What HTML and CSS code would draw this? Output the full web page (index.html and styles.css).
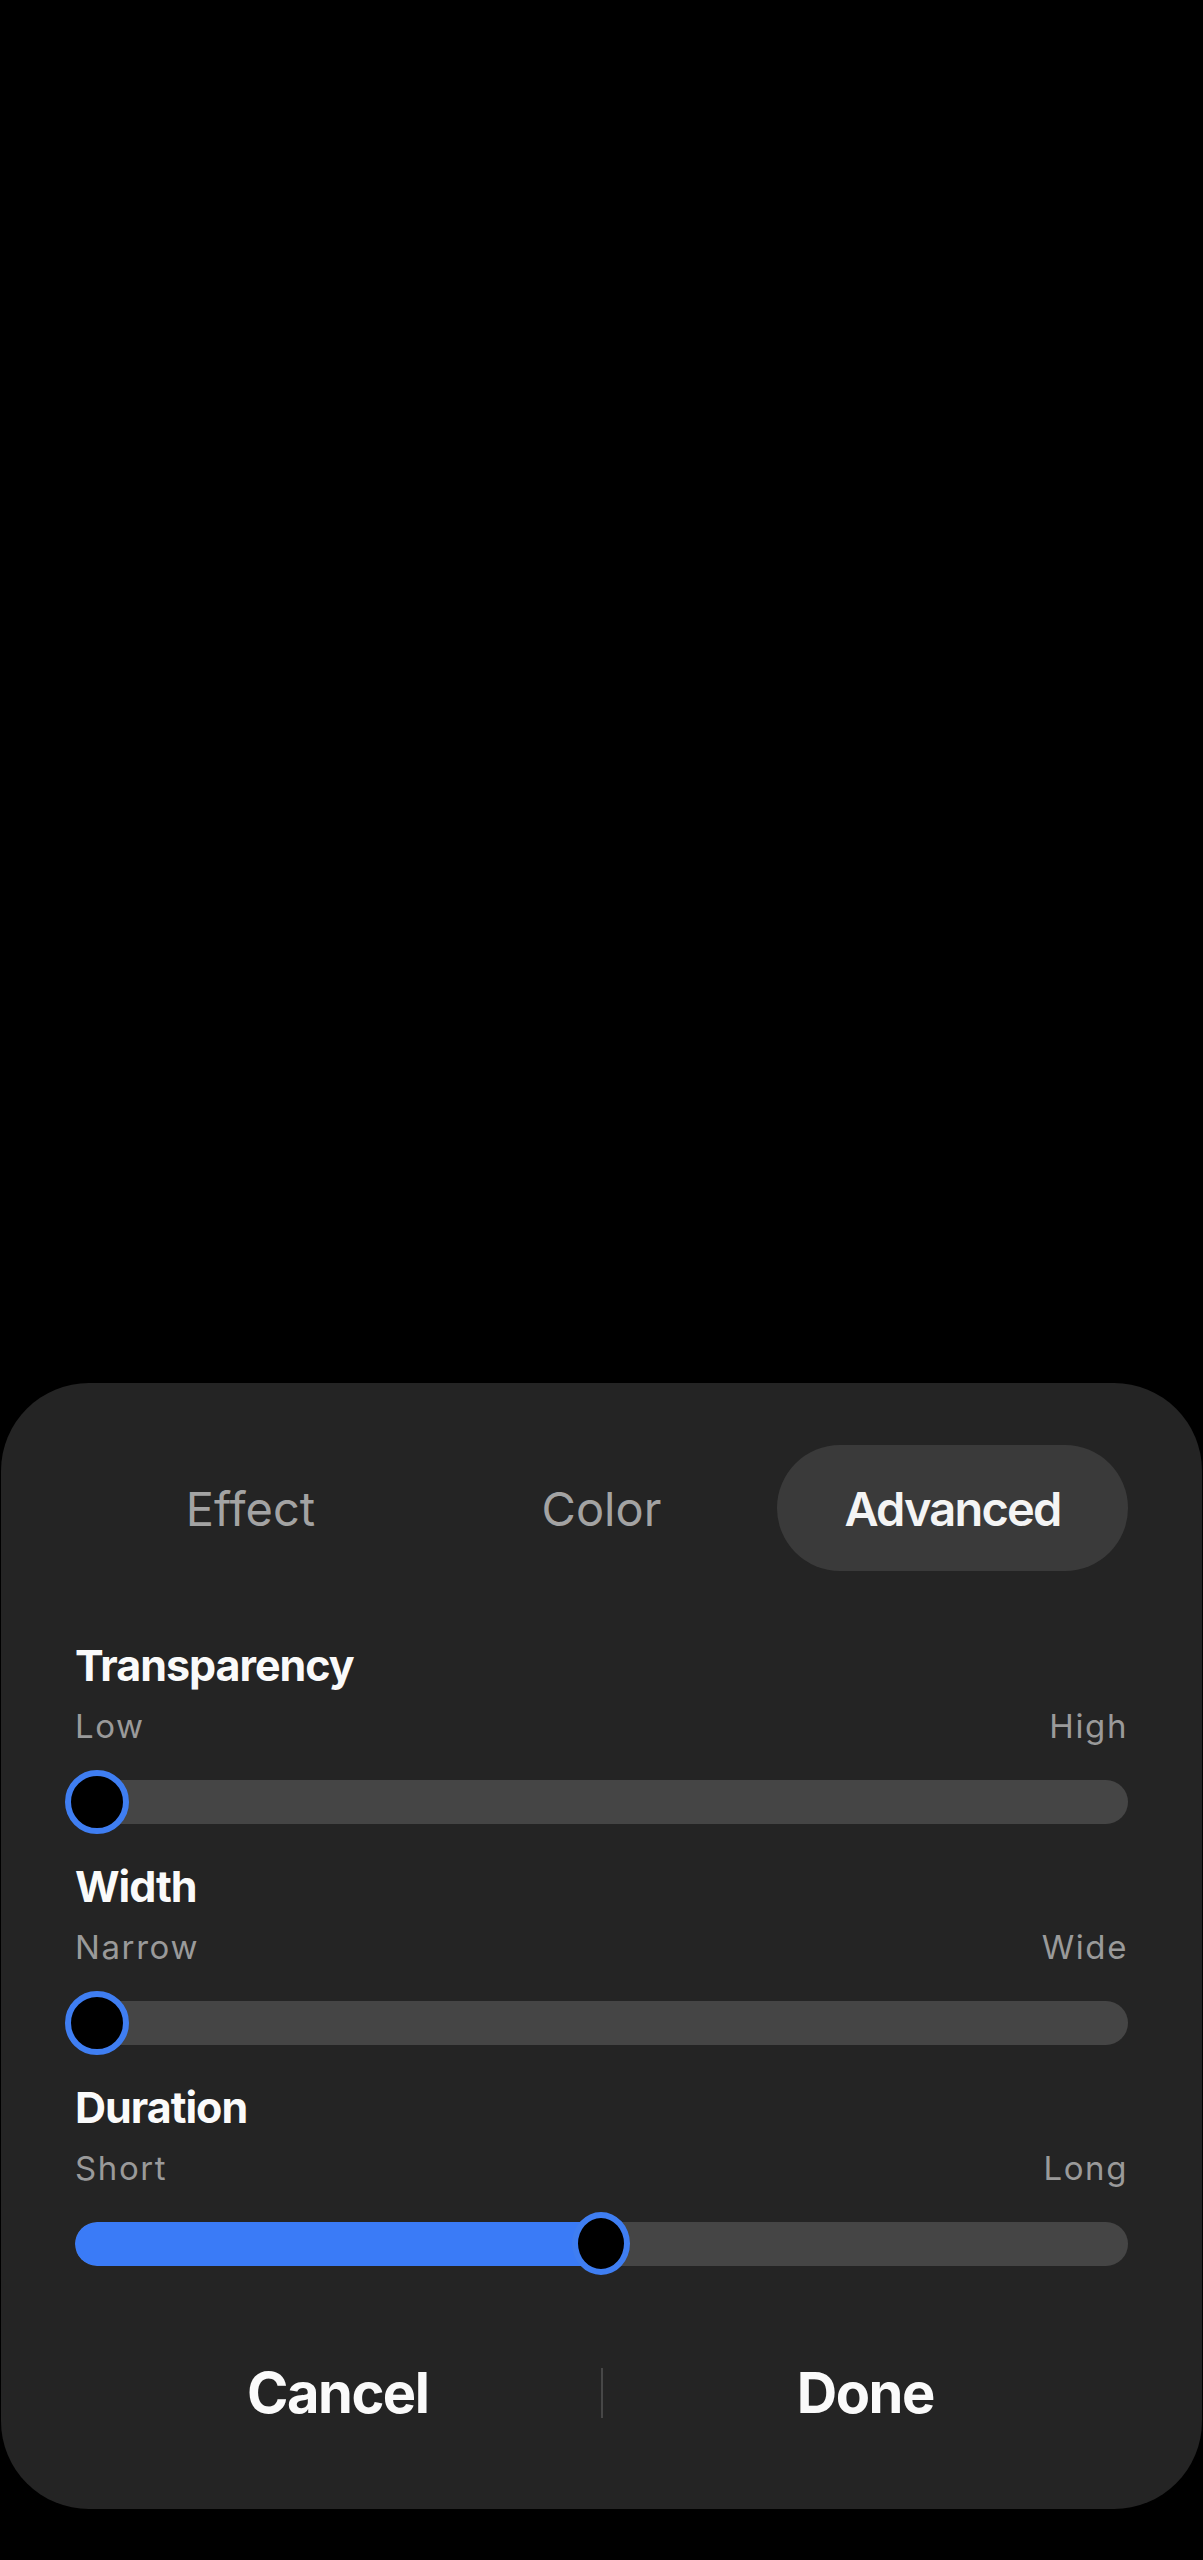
FILE: index.html
```html
<!DOCTYPE html>
<html lang="en">
<head>
<meta charset="utf-8">
<title>Advanced settings</title>
<link rel="stylesheet" href="styles.css">
</head>
<body>
<div class="screen">
  <div class="sheet">
    <div class="tabs">
      <div class="tab">Effect</div>
      <div class="tab">Color</div>
      <div class="tab tab-active">Advanced</div>
    </div>
    <div class="sections">
      <div class="section">
        <div class="title">Transparency</div>
        <div class="range"><span>Low</span><span>High</span></div>
        <div class="slider">
          <div class="track"></div>
          <div class="thumb" style="left: 0px;"></div>
        </div>
      </div>
      <div class="section">
        <div class="title">Width</div>
        <div class="range"><span>Narrow</span><span>Wide</span></div>
        <div class="slider">
          <div class="track"></div>
          <div class="thumb" style="left: 0px;"></div>
        </div>
      </div>
      <div class="section">
        <div class="title">Duration</div>
        <div class="range"><span>Short</span><span>Long</span></div>
        <div class="slider">
          <div class="track"><div class="fill" style="width: 526px;"></div></div>
          <div class="thumb thumb-narrow" style="left: 497px;"></div>
        </div>
      </div>
    </div>
    <div class="actions">
      <div class="btn">Cancel</div>
      <div class="divider"></div>
      <div class="btn">Done</div>
    </div>
  </div>
</div>
</body>
</html>
```
FILE: styles.css
```css
html, body {
  margin: 0;
  padding: 0;
  background: #000;
}
body {
  font-family: Inter, Roboto, "Liberation Sans", sans-serif;
  color: #fafafa;
}
.screen {
  min-height: 2560px;
  display: flex;
  flex-direction: column;
  justify-content: flex-end;
  padding: 0 1px 51px 1px;
  box-sizing: border-box;
}
.sheet {
  background: #242424;
  border-radius: 88px;
  padding: 62px 74px 81px 74px;
}
.tabs {
  display: grid;
  grid-template-columns: repeat(3, 1fr);
  height: 126px;
}
.tab {
  display: flex;
  align-items: center;
  justify-content: center;
  font-size: 47px;
  color: #a3a3a3;
  border-radius: 63px;
}
.tab-active {
  background: #3a3a3a;
  color: #f4f4f4;
  font-weight: 600;
  letter-spacing: -1.8px;
}
.sections {
  margin-top: 68px;
  display: flex;
  flex-direction: column;
  gap: 26px;
}
.section {
  display: flex;
  flex-direction: column;
}
.title {
  font-size: 43px;
  line-height: 52px;
  font-weight: 700;
  letter-spacing: -1px;
  color: #fafafa;
}
.range {
  margin-top: 13px;
  display: flex;
  justify-content: space-between;
  font-size: 33px;
  line-height: 44px;
  letter-spacing: 1.6px;
  color: #9a9a9a;
}
.slider {
  margin-top: 22px;
  position: relative;
  height: 64px;
  display: flex;
  align-items: center;
}
.track {
  flex: 1;
  height: 44px;
  border-radius: 22px;
  background: #454545;
  overflow: hidden;
  display: flex;
}
.fill {
  height: 100%;
  background: #3a7bf7;
  border-radius: 22px 0 0 22px;
}
.thumb {
  position: absolute;
  top: 0;
  width: 64px;
  height: 64px;
  box-sizing: border-box;
  border-radius: 50%;
  border: 6px solid #3f7ef2;
  background: #000;
  margin-left: -10px;
}
.thumb-narrow {
  width: 58px;
  height: 63px;
  margin-left: 0;
}
.actions {
  margin-top: 82px;
  display: flex;
  align-items: center;
  height: 70px;
}
.btn {
  flex: 1;
  text-align: center;
  font-size: 56px;
  line-height: 70px;
  font-weight: 700;
  letter-spacing: -1.5px;
  color: #fafafa;
}
.divider {
  width: 2px;
  height: 50px;
  background: #474747;
}
```
